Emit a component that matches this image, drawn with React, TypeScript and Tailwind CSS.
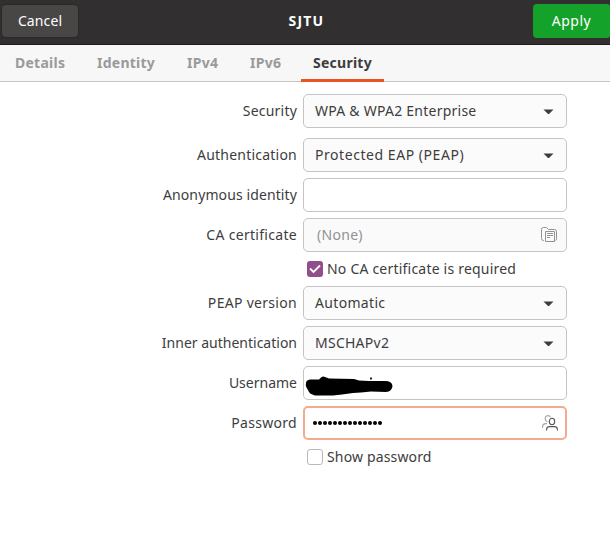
import type { ReactNode } from 'react';

function Tab({ label, className, active }: { label: string; className: string; active?: boolean }) {
  return (
    <button
      className={`flex shrink-0 items-center whitespace-nowrap font-bold ${
        active ? 'h-[37px] border-b-[3px] border-[#e95420] pt-[2px] text-[#3d3d3d]' : 'h-9 text-[#9a9a9a]'
      } ${className}`}
    >
      {label}
    </button>
  );
}

function Row({ label, track, children }: { label: string; track: string; children: ReactNode }) {
  return (
    <div className="flex h-[34px] items-center gap-1.5">
      <div className="flex w-[297px] justify-end whitespace-nowrap">
        <span className={track}>{label}</span>
      </div>
      {children}
    </div>
  );
}

function Select({ value, track }: { value: string; track: string }) {
  return (
    <div className="flex h-[34px] w-[264px] items-center justify-between rounded-[5px] border border-[#c4c4c4] bg-[#fbfbfb] pr-3 pl-[11px]">
      <span className={`whitespace-nowrap ${track}`}>{value}</span>
      <svg width="11" height="6" viewBox="0 0 11 6" className="mt-px">
        <path d="M0.5 0.5H10.5L6 5H5Z" fill="#3d3d3d" />
      </svg>
    </div>
  );
}

function FolderIcon() {
  return (
    <svg width="16" height="16" viewBox="0 0 16 16" fill="none" stroke="#929292">
      <path d="M3 13.5H2.5Q0.500 13.500 0.5 11.5V2.500Q0.500 0.500 2.500 0.500H5.5L7.5 2.5H13.5Q15.5 2.5 15.5 4.500V11.5Q15.500 13.500 14.500 13.500" />
      <path d="M4.5 4.5H13.5V14.5H4.5Z" />
      <path d="M6 6.5H12M6 8.5H12M6 10.5H9" />
    </svg>
  );
}

function UsersIcon() {
  return (
    <svg width="16" height="16" viewBox="0 0 16 16" fill="none" strokeWidth="1.1">
      <path d="M8.5 2.2Q7.8 0.6 6 0.6Q3.2 0.6 3.2 3.6Q3.2 6.4 5.5 6.7M0.6 13V11.5Q0.6 8.9 3.6 8.6H5" stroke="#a9a9a9" />
      <ellipse cx="10" cy="6.5" rx="2.7" ry="3.2" stroke="#555555" />
      <path d="M4.6 15.5V14.5Q4.6 11.6 7.6 11.6H12.4Q15.4 11.6 15.4 14.5V15.5" stroke="#555555" />
    </svg>
  );
}

export default function App() {
  return (
    <div className="h-[560px] w-[610px] overflow-hidden bg-white font-['Noto_Sans',sans-serif] text-[14px] leading-5 text-[#3d3d3d]">
      <header className="flex h-[45px] items-start justify-between border-b border-[#1d1b1b] bg-[#322f30] text-white">
        <button className="mt-[5px] ml-[2px] flex h-8 w-[76px] items-center justify-center rounded-[4px] bg-[#494745] shadow-[0_0_0_1px_#2b2828]">
          <span className="tracking-[0.1px]">Cancel</span>
        </button>
        <h1 className="mt-[11px] ml-[2px] font-bold tracking-[1.2px]">SJTU</h1>
        <button className="mt-1 flex h-[34px] w-[77px] items-center justify-center rounded-l-[4px] rounded-r-[3px] bg-[#14a22b]">
          <span className="tracking-[0.5px]">Apply</span>
        </button>
      </header>
      <nav className="flex h-[37px] border-b border-[#c4c4c4] bg-[#f7f7f7]">
        <Tab label="Details" className="w-[82px] pl-[15px] tracking-[0.25px]" />
        <Tab label="Identity" className="w-[90px] pl-[15px] tracking-[0.25px]" />
        <Tab label="IPv4" className="w-[63px] pl-[15px] tracking-[0.25px]" />
        <Tab label="IPv6" className="w-[66px] pl-[15px] tracking-[0.25px]" />
        <Tab label="Security" className="w-[83px] pl-[12px] tracking-[0.25px]" active />
      </nav>
      <main className="flex flex-col gap-1.5 pt-3">
        <div className="mb-1">
          <Row label="Security" track="tracking-[0.2px]">
            <Select value="WPA & WPA2 Enterprise" track="tracking-[0.24px]" />
          </Row>
        </div>
        <Row label="Authentication" track="tracking-[0.22px]">
          <Select value="Protected EAP (PEAP)" track="tracking-[0.55px]" />
        </Row>
        <Row label="Anonymous identity" track="tracking-[0.11px]">
          <div className="h-[34px] w-[264px] rounded-[5px] border border-[#c4c4c4] bg-white" />
        </Row>
        <Row label="CA certificate" track="tracking-[0.3px]">
          <div className="flex h-[34px] w-[264px] items-center justify-between rounded-[5px] border border-[#c4c4c4] bg-[#fafafa] pr-[9px] pl-[13px] text-[#929292]">
            <span className="tracking-[0.3px]">(None)</span>
            <FolderIcon />
          </div>
        </Row>
        <div className="ml-[307px] flex h-[22px] items-center gap-1">
          <span className="flex size-4 items-center justify-center rounded-[3px] bg-[#924d8b]">
            <svg width="12" height="10" viewBox="0 0 12 10" fill="none" stroke="white" strokeWidth="1.8">
              <path d="M1 4.5L4.5 8L11 1.5" />
            </svg>
          </span>
          <span className="tracking-[0.21px]">No CA certificate is required</span>
        </div>
        <Row label="PEAP version" track="tracking-[0.3px]">
          <Select value="Automatic" track="tracking-[0.33px]" />
        </Row>
        <Row label="Inner authentication" track="">
          <Select value="MSCHAPv2" track="tracking-[0.25px]" />
        </Row>
        <Row label="Username" track="">
          <div className="flex h-[34px] w-[264px] items-start rounded-[5px] border border-[#c4c4c4] bg-white pt-2 pl-px">
            <svg width="88" height="22" viewBox="0 0 88 22">
              <path d="M1 8Q1 5 5 4.500L14 4.500L16 2.500Q18 1 20 2L24 3.500L49 4L54 5.500L64 6L80 6Q87 6 87.500 11Q87 16.500 81 17L66 16.500L56 17.500L48 18L37 19.500L28 20.500L10 20.500Q4 19 3 15Q0 11 1 8Z" fill="black" />
              <path d="M65 2.500H67V4.500H65Z" fill="#222222" />
            </svg>
          </div>
        </Row>
        <Row label="Password" track="tracking-[0.3px]">
          <div className="flex h-[34px] w-[264px] items-center justify-between rounded-[5px] border-2 border-[#f4aa90] bg-white pr-[7px] pl-[7.5px]">
            <div className="flex gap-px">
              {Array.from({ length: 14 }, (_, i) => (
                <span key={i} className="size-1 rounded-full bg-black" />
              ))}
            </div>
            <UsersIcon />
          </div>
        </Row>
        <div className="ml-[307px] flex h-[22px] items-center gap-1">
          <span className="size-4 rounded-[3px] border border-[#b8b8b8] bg-white" />
          <span className="tracking-[0.15px]">Show password</span>
        </div>
      </main>
    </div>
  );
}
